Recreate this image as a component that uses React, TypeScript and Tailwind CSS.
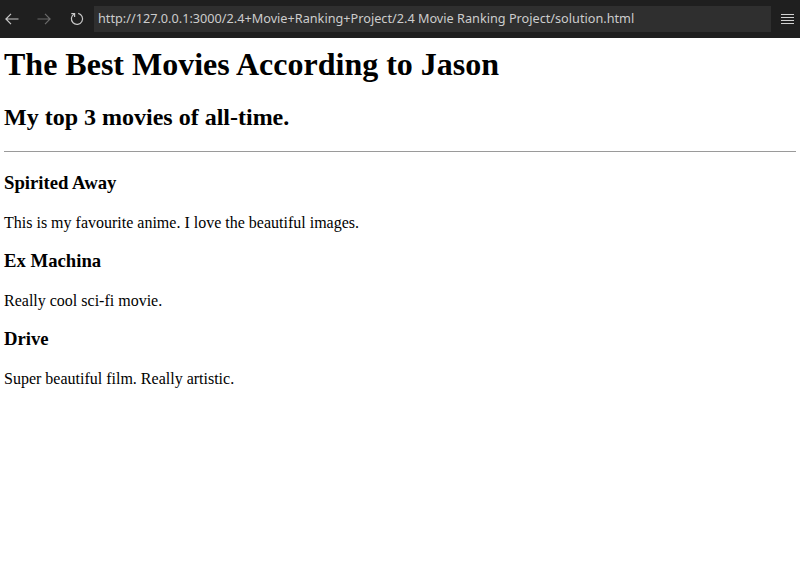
export const movies = [
  { title: "Spirited Away", note: "This is my favourite anime. I love the beautiful images." },
  { title: "Ex Machina", note: "Really cool sci-fi movie." },
  { title: "Drive", note: "Super beautiful film. Really artistic." },
];

function Toolbar() {
  return (
    <div className="flex h-[38px] items-center bg-[#1f1f1f] font-['Noto_Sans',sans-serif]">
      <div className="flex w-[94px] items-center">
        {/* back */}
        <svg width="14" height="12" viewBox="0 0 14 12" className="ml-[5px]" fill="none" stroke="#c8c8c8" strokeWidth="1.2">
          <path d="M13.5 6H1M6 0.8L0.9 6L6 11.2" />
        </svg>
        {/* forward */}
        <svg width="14" height="12" viewBox="0 0 14 12" className="ml-[18px]" fill="none" stroke="#6b6b6b" strokeWidth="1.2">
          <path d="M0.5 6H13M8 0.8L13.1 6L8 11.2" />
        </svg>
        {/* refresh */}
        <svg width="14" height="14" viewBox="0 0 14 14" className="ml-[19px]" fill="none" stroke="#c8c8c8" strokeWidth="1.2">
          <path d="M4.2 1.9A5.6 5.6 0 1 0 8.2 1.3" />
          <path d="M4.6 5V1.6H1.3" />
        </svg>
      </div>
      <div className="flex h-[26px] w-[677px] items-center bg-[#2f2f2f] pl-[4px] text-[12.7px] text-[#cccccc]">
        http://127.0.0.1:3000/2.4+Movie+Ranking+Project/2.4 Movie Ranking Project/solution.html
      </div>
      <div className="ml-[10px] flex w-[13px] flex-col gap-[2px]">
        <div className="h-px bg-[#d0d0d0]" />
        <div className="h-px bg-[#d0d0d0]" />
        <div className="h-px bg-[#d0d0d0]" />
        <div className="h-px bg-[#d0d0d0]" />
      </div>
    </div>
  );
}

export default function App() {
  return (
    <div className="min-h-[565px] bg-white">
      <Toolbar />
      <div className="px-1 pt-2 font-['Liberation_Serif',serif] text-black leading-[normal]">
        <h1 className="mb-[21px] text-[32px] font-bold">The Best Movies According to Jason</h1>
        <h2 className="text-[24px] font-bold">My top 3 movies of all-time.</h2>
        <hr className="mt-[20px] border-t border-[#9a9a9a]" />
        {movies.map((m, i) => (
          <div key={m.title}>
            <h3 className={i === 0 ? "mt-[20px] text-[18.72px] font-bold" : "mt-[18px] text-[18.72px] font-bold"}>{m.title}</h3>
            <p className="mt-[20px] text-[16px]">{m.note}</p>
          </div>
        ))}
      </div>
    </div>
  );
}
